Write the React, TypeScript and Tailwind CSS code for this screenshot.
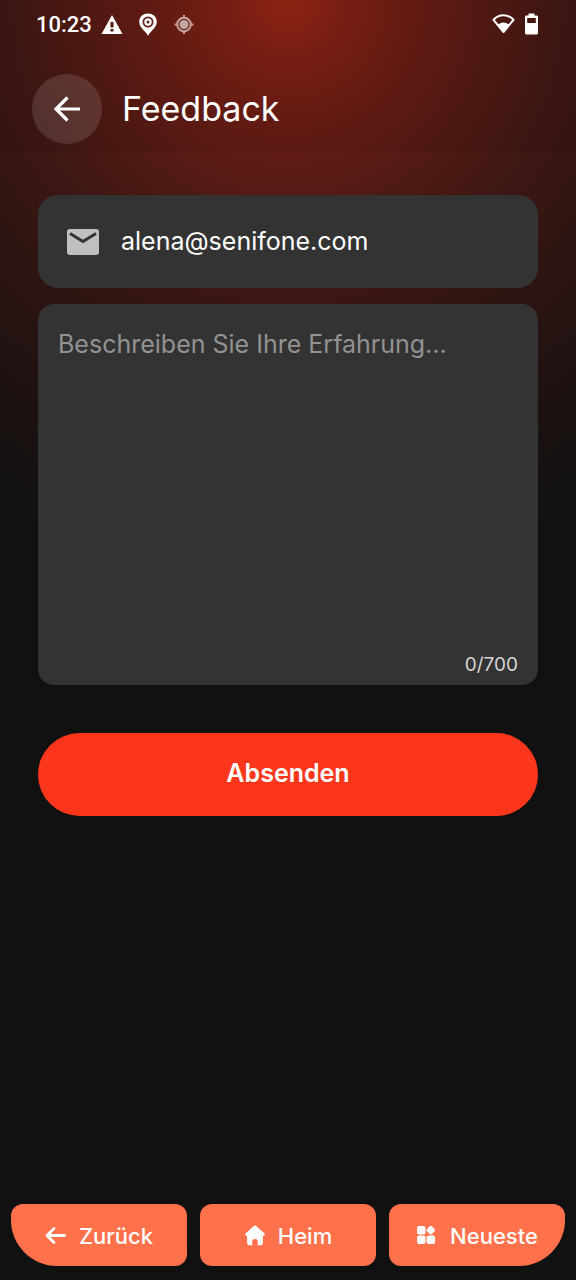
import React, { useState } from "react";

const MAX_LENGTH = 700;

const StatusBar: React.FC = () => (
  <div className="flex h-12 items-center justify-between pl-9 pr-[37px]">
    <div className="flex items-center pt-px">
      <span className="font-['Roboto',sans-serif] text-[22px] leading-7 font-medium">
        10:23
      </span>
      <svg className="ml-2 h-6 w-6" viewBox="0 0 24 24" fill="currentColor">
        <path d="M1.500 21h21L12 2 1.500 21zm12-2.500h-3v-2.400h3v2.400zm0-4h-3V9h3v5.500z" />
      </svg>
      <svg className="ml-3 h-6 w-6" viewBox="0 0 24 24" fill="none">
        <path
          d="M12 .500C7.100.500 3.200 4 3.200 8.900c0 5.500 5.700 8.300 8.800 13.800 3.100-5.500 8.800-8.300 8.800-13.800C20.800 4 16.900.500 12 .500z"
          fill="currentColor"
        />
        <circle cx="12" cy="9" r="4.600" stroke="#64201a" strokeWidth="1.800" />
        <circle cx="12" cy="9" r="1.500" fill="#64201a" />
      </svg>
      <svg
        className="ml-3 h-6 w-6 opacity-60"
        viewBox="0 0 24 24"
        fill="none"
        stroke="currentColor"
        strokeWidth="2"
      >
        <circle cx="12" cy="11.500" r="6.800" />
        <circle cx="12" cy="11.500" r="4.600" fill="currentColor" stroke="none" />
        <path d="M12 2v3M12 18v3M2.500 11.500h3M18.500 11.500h3" />
      </svg>
    </div>
    <div className="flex items-center gap-2">
      <svg className="h-6 w-6" viewBox="0 0 24 24" fill="none">
        <path
          d="M1.500 7.800C7 1.800 16 1.800 21.500 7.800L11.500 20z"
          stroke="currentColor"
          strokeWidth="2"
          strokeLinejoin="round"
        />
        <path
          d="M5.500 13c3.300-3.400 8.700-3.400 12 0l-6 7.500z"
          fill="currentColor"
        />
      </svg>
      <svg className="h-6 w-[15px]" viewBox="0 0 15 24" fill="currentColor">
        <path
          fillRule="evenodd"
          d="M4.500 1.500h6v2h2c.8 0 1.500.700 1.500 1.500v16c0 .8-.7 1.500-1.500 1.500h-10C1.700 22.500 1 21.800 1 21V5c0-.8.700-1.500 1.500-1.500h2v-2zM3.200 6v5h8.600V6H3.200z"
        />
      </svg>
    </div>
  </div>
);

const Header: React.FC = () => (
  <header className="bg-black/5 pb-2">
    <StatusBar />
    <div className="mt-[26px] flex items-center gap-5 px-8">
      <button
        aria-label="Zurück"
        className="flex h-[70px] w-[70px] items-center justify-center rounded-full bg-white/12"
      >
        <svg
          className="h-8 w-8"
          viewBox="0 0 32 32"
          fill="none"
          stroke="currentColor"
          strokeWidth="3.200"
        >
          <path d="M29 16H5.500M16.500 4.500 5 16l11.500 11.500" />
        </svg>
      </button>
      <h1 className="text-[34px] leading-10">Feedback</h1>
    </div>
  </header>
);

const FeedbackForm: React.FC = () => {
  const [email, setEmail] = useState("alena@senifone.com");
  const [message, setMessage] = useState("");

  return (
    <form
      className="flex flex-col px-[38px] pt-[43px]"
      onSubmit={(e) => e.preventDefault()}
    >
      <div className="flex h-[93px] items-center gap-[22px] rounded-[20px] bg-[#333333] px-[29px]">
        <label htmlFor="email" aria-label="E-Mail" className="shrink-0">
          <svg className="h-8 w-8" viewBox="0 0 32 32">
            <rect y="3" width="32" height="26" rx="3" fill="#c0c0c0" />
            <path
              d="M3 7.500 16 15.500 29 7.500"
              fill="none"
              stroke="#333333"
              strokeWidth="3"
            />
          </svg>
        </label>
        <input
          id="email"
          type="email"
          value={email}
          onChange={(e) => setEmail(e.target.value)}
          className="min-w-0 flex-1 bg-transparent pb-0.5 text-[25px] leading-8 outline-none"
        />
      </div>

      <div className="mt-4 flex flex-col rounded-[16px] bg-[#333333] px-5 pt-6 pb-2">
        <textarea
          aria-label="Beschreiben Sie Ihre Erfahrung"
          placeholder="Beschreiben Sie Ihre Erfahrung..."
          maxLength={MAX_LENGTH}
          rows={10}
          value={message}
          onChange={(e) => setMessage(e.target.value)}
          className="h-[325px] resize-none bg-transparent text-[25px] leading-8 outline-none placeholder:text-[#929292]"
        />
        <span className="self-end text-[19px] leading-6 text-[#d6d6d6]">
          {message.length}/{MAX_LENGTH}
        </span>
      </div>

      <button
        type="submit"
        className="mt-12 h-[83px] rounded-full bg-[#fb361b] pb-0.5 text-[25px] font-semibold"
      >
        Absenden
      </button>
    </form>
  );
};

const navButton =
  "flex h-[62px] flex-1 items-center justify-center gap-3 rounded-[12px] bg-[#ff714b] pt-0.5 text-[22px] font-medium";

const BottomNav: React.FC = () => (
  <nav className="mt-auto flex gap-[13px] px-[11px] pb-3.5">
    <button className={`${navButton} rounded-bl-[46px]`}>
      <svg
        className="h-[22px] w-[22px]"
        viewBox="0 0 22 22"
        fill="none"
        stroke="currentColor"
        strokeWidth="2.800"
        strokeLinecap="round"
        strokeLinejoin="round"
      >
        <path d="M19.500 10.500h-17M9 3.500l-7 7 7 7" />
      </svg>
      Zurück
    </button>
    <button className={navButton}>
      <svg className="h-[22px] w-[22px]" viewBox="0 0 22 22" fill="currentColor">
        <path d="M9.500 1.300a2.200 2.200 0 0 1 3 0l7.800 7c1 .9.500 2.500-.8 2.500h-.6v7.200c0 1.400-.8 2.200-2.200 2.200h-3v-4c0-1.400-.9-2.200-2.700-2.200s-2.700.8-2.700 2.200v4h-3c-1.400 0-2.200-.8-2.200-2.200v-7.200h-.6c-1.300 0-1.800-1.600-.8-2.500z" />
      </svg>
      Heim
    </button>
    <button className={`${navButton} rounded-br-[46px]`}>
      <svg className="h-[22px] w-[22px]" viewBox="0 0 22 22" fill="currentColor">
        <rect x="1" y="1" width="8.500" height="8.500" rx="2" />
        <rect x="1" y="10.600" width="8.500" height="8.500" rx="2" />
        <rect x="10.600" y="10.600" width="8.500" height="8.500" rx="2" />
        <rect
          x="11.300"
          y="1.700"
          width="7"
          height="7"
          rx="1.500"
          transform="rotate(45 14.800 5.200)"
        />
      </svg>
      Neueste
    </button>
  </nav>
);

export default function App() {
  return (
    <div className="flex min-h-screen flex-col bg-[#111111] bg-[radial-gradient(circle_580px_at_50%_0,#942416_0%,#741e15_15%,#571b14_32%,#3c1713_50%,#2c1412_65%,#1d1211_82%,#111111_100%)] font-['Inter',sans-serif] text-white">
      <Header />
      <FeedbackForm />
      <BottomNav />
    </div>
  );
}
